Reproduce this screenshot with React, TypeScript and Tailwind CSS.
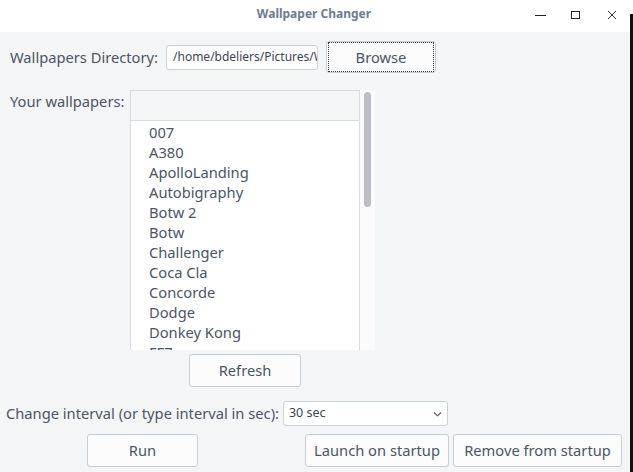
import React from "react";

const items = [
  "007",
  "A380",
  "ApolloLanding",
  "Autobigraphy",
  "Botw 2",
  "Botw",
  "Challenger",
  "Coca Cla",
  "Concorde",
  "Dodge",
  "Donkey Kong",
  "FF7",
];

function Btn({ children, className = "", focus = false }: { children: React.ReactNode; className?: string; focus?: boolean }) {
  return (
    <div
      className={
        "flex items-center justify-center bg-[#fcfcfd] border border-[#c9cdd6] rounded-[3px] text-[14.7px] text-[#4b5566] " +
        className
      }
    >
      {focus ? (
        <div className="flex items-center justify-center w-full h-full border border-dotted border-[#3a3a3a] m-[1px]">
          {children}
        </div>
      ) : (
        children
      )}
    </div>
  );
}

export default function App() {
  return (
    <div
      className="w-[633px] h-[472px] flex overflow-hidden"
      style={{ fontFamily: '"Noto Sans", sans-serif' }}
    >
      <div className="flex-1 flex flex-col">
        <div className="h-[32px] bg-white flex items-center relative">
          <div className="absolute left-0 right-0 text-center text-[12px] font-bold text-[#6e7b91] top-[5px] pr-[2px]">
            Wallpaper Changer
          </div>
          <div className="ml-auto flex items-center mr-[13px] mt-[-3px]">
            <svg width="11" height="10" viewBox="0 0 11 10">
              <line x1="0" y1="5.5" x2="11" y2="5.5" stroke="#222" strokeWidth="1" />
            </svg>
            <svg className="ml-[25px]" width="10" height="10" viewBox="0 0 10 10">
              <rect x="0.5" y="1.5" width="8" height="7" fill="none" stroke="#222" strokeWidth="1" />
            </svg>
            <svg className="ml-[26px]" width="10" height="10" viewBox="0 0 10 10">
              <path d="M1 1 L9 9 M9 1 L1 9" stroke="#333" strokeWidth="1" />
            </svg>
          </div>
        </div>
        <div className="flex-1 bg-[#f4f5f7] flex flex-col text-[#4b5566]">
          <div className="flex items-center mt-[9px] h-[32px]">
            <div className="ml-[10px] text-[14.7px]">Wallpapers Directory:</div>
            <div className="ml-[8px] w-[152px] h-[25px] bg-white border border-[#cdd1da] rounded-[3px] overflow-hidden flex items-center pl-[6px] text-[12px] whitespace-nowrap text-[#3d4452]">
              /home/bdeliers/Pictures/Wallpapers
            </div>
            <Btn focus className="ml-[8px] w-[110px] h-[32px]">Browse</Btn>
          </div>
          <div className="flex mt-[17px]">
            <div className="ml-[10px] w-[120px] text-[14.7px] leading-[20px] mt-[1px]">Your wallpapers:</div>
            <div className="w-[245px] h-[260px] flex bg-white">
              <div className="w-[230px] flex flex-col border-l border-t border-[#d8dde5] overflow-hidden">
                <div className="h-[30px] shrink-0 bg-[#f4f5f7] border border-[#d8dde5] border-l-0 border-t-0"></div>
                <div className="flex flex-col pl-[18px] pt-[1px] border-r border-[#d8dde5] flex-1">
                  {items.map((it) => (
                    <div key={it} className="h-[20px] leading-[20px] text-[14.7px] whitespace-nowrap">
                      {it}
                    </div>
                  ))}
                </div>
              </div>
              <div className="w-[15px] bg-[#fbfbfc] flex justify-center pt-[2px]">
                <div className="w-[7px] h-[115px] rounded-full bg-[#bdbdc5]"></div>
              </div>
            </div>
          </div>
          <div className="flex mt-[4px]">
            <Btn className="ml-[189px] w-[112px] h-[33px]">Refresh</Btn>
          </div>
          <div className="flex items-center mt-[14px] h-[25px]">
            <div className="ml-[6px] text-[14.7px]">Change interval (or type interval in sec):</div>
            <div className="ml-[4px] w-[165px] h-[25px] bg-white border border-[#cdd1da] rounded-[3px] flex items-center pl-[5px] text-[12.5px] text-[#3d4452]">
              <span>30 sec</span>
              <svg className="ml-auto mr-[5px]" width="9" height="6" viewBox="0 0 9 6">
                <path d="M1 1.5 L4.5 4.8 L8 1.5" fill="none" stroke="#555" strokeWidth="1.1" />
              </svg>
            </div>
          </div>
          <div className="flex mt-[8px]">
            <Btn className="ml-[87px] w-[111px] h-[33px]">Run</Btn>
            <Btn className="ml-[107px] w-[144px] h-[33px]">Launch on startup</Btn>
            <Btn className="ml-[4px] w-[169px] h-[33px]">Remove from startup</Btn>
          </div>
        </div>
      </div>
      <div className="w-[3px] flex flex-col">
        <div className="h-[14px] bg-white"></div>
        <div className="flex-1 bg-[#111]"></div>
      </div>
    </div>
  );
}
